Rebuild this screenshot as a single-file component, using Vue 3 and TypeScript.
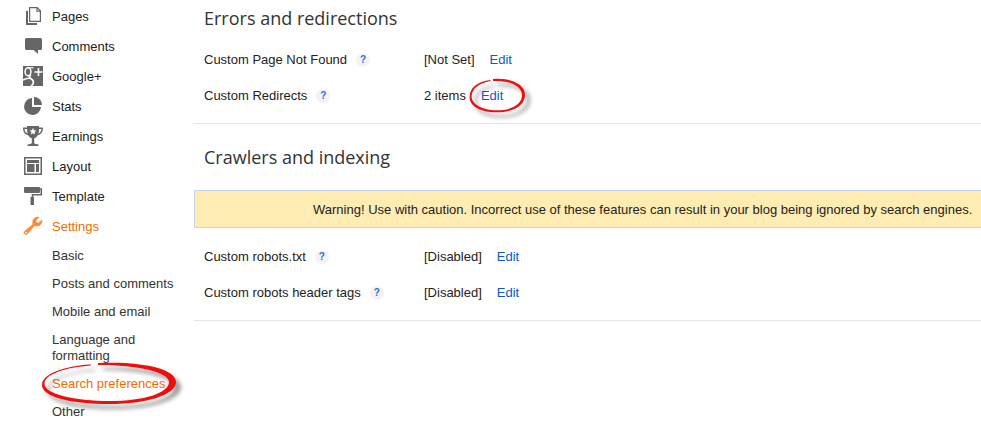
<script setup lang="ts">
interface NavItem {
  label: string
  icon: string
  active?: boolean
}

interface SubItem {
  label: string
  active?: boolean
}

interface Setting {
  label: string
  value: string
  marked?: boolean
}

const navItems: NavItem[] = [
  { label: 'Pages', icon: 'pages' },
  { label: 'Comments', icon: 'comments' },
  { label: 'Google+', icon: 'gplus' },
  { label: 'Stats', icon: 'stats' },
  { label: 'Earnings', icon: 'earnings' },
  { label: 'Layout', icon: 'layout' },
  { label: 'Template', icon: 'template' },
  { label: 'Settings', icon: 'settings', active: true },
]

const subItems: SubItem[] = [
  { label: 'Basic' },
  { label: 'Posts and comments' },
  { label: 'Mobile and email' },
  { label: 'Language and formatting' },
  { label: 'Search preferences', active: true },
  { label: 'Other' },
]

const errorSettings: Setting[] = [
  { label: 'Custom Page Not Found', value: '[Not Set]' },
  { label: 'Custom Redirects', value: '2 items', marked: true },
]

const crawlerSettings: Setting[] = [
  { label: 'Custom robots.txt', value: '[Disabled]' },
  { label: 'Custom robots header tags', value: '[Disabled]' },
]

const sections = [
  { title: 'Errors and redirections', warning: '', settings: errorSettings },
  {
    title: 'Crawlers and indexing',
    warning:
      'Warning! Use with caution. Incorrect use of these features can result in your blog being ignored by search engines.',
    settings: crawlerSettings,
  },
]
</script>

<template>
  <div class="page">
    <nav class="sidebar" aria-label="Blog">
      <ul class="nav">
        <li v-for="item in navItems" :key="item.label">
          <a href="#" class="nav-link" :class="{ active: item.active }">
            <svg class="icon" viewBox="0 0 20 20" width="20" height="20" aria-hidden="true">
              <g v-if="item.icon === 'pages'">
                <path d="M3 5h2v12h9v2H3z" fill="currentColor" />
                <path d="M6.6 1.6h7.6l3.2 3.2v10.6H6.6z" fill="#fff" stroke="currentColor" stroke-width="1.2" />
                <path d="M14 1.5v3.6h3.6" fill="none" stroke="currentColor" stroke-width="1.2" />
              </g>
              <path
                v-else-if="item.icon === 'comments'"
                d="M3.500 2h14A1.500 1.500 0 0 1 19 3.500v9a1.500 1.500 0 0 1-1.500 1.500H15v4l-4.500-4h-7A1.500 1.500 0 0 1 2 12.500v-9A1.500 1.500 0 0 1 3.500 2z"
                fill="currentColor"
              />
              <g v-else-if="item.icon === 'gplus'">
                <rect width="20" height="20" fill="currentColor" />
                <g fill="none" stroke="#fff">
                  <ellipse cx="5" cy="5.700" rx="2.900" ry="4" stroke-width="1.500" />
                  <path d="M4.500 1.800h6" stroke-width="1.200" />
                  <path d="M8 9q-2.600 1.600-.6 3.200 3.400 2 2.900 4.600-.4 2-2.300 3.200" stroke-width="1.700" />
                  <path d="M0 14.200q3-2.200 7-1.800" stroke-width="1.500" />
                  <path d="M11.500 6h8M15.500 2v8" stroke-width="1.600" />
                </g>
              </g>
              <g v-else-if="item.icon === 'stats'" fill="currentColor">
                <path d="M9 2a8.500 8.500 0 1 0 9 9H9z" />
                <path d="M11 1a8 8 0 0 1 8 8h-8z" />
              </g>
              <g v-else-if="item.icon === 'earnings'">
                <path
                  d="M4 0h12v1.500h4c0 4-1.500 6.800-5.200 7.800-1 1.700-2.100 2.500-3.600 3V17c0 1 2.300 1 4.300 1.500V20h-11v-1.500C6.500 18 8.800 18 8.800 17v-4.700c-1.500-.5-2.600-1.300-3.600-3C1.500 8.300 0 5.500 0 1.500h4z"
                  fill="currentColor"
                />
                <path d="M1.500 3H4c0 1.800.2 3.300.7 4.600C2.600 6.700 1.700 5.200 1.500 3zM18.500 3H16c0 1.800-.2 3.300-.7 4.600 2.100-.9 3-2.400 3.200-4.600z" fill="#fff" />
                <path d="M10 1.800l1 2.400 2.600.2-2 1.700.6 2.500L10 7.300 7.800 8.600l.6-2.500-2-1.700 2.600-.2z" fill="#fff" />
              </g>
              <g v-else-if="item.icon === 'layout'">
                <rect x="1.750" y="1.750" width="16.500" height="16.500" fill="#fff" stroke="currentColor" stroke-width="1.500" />
                <path d="M4 4h12v3H4zM4 8h7.500v8H4zM13 8h3v8h-3z" fill="currentColor" />
              </g>
              <g v-else-if="item.icon === 'template'">
                <path d="M2 1h14q1 0 1 1v4q0 1-1 1H2q-1 0-1-1V2q0-1 1-1z" fill="currentColor" />
                <path d="M16.500 3H18.300v5.700H9.500V12" fill="none" stroke="currentColor" stroke-width="1.600" />
                <path d="M7.500 11h3.500v8H7.500z" fill="currentColor" />
              </g>
              <g v-else>
                <path
                  d="M16 1.200l-3 3.300.3 2.200 2.200.3L18.900 4c.5 3-1.500 6-5.100 6-.9 0-1.600-.2-2.200-.5L4.300 17.900c-1.700 1.800-4.500-.6-2.900-2.500L10 8.200C8.700 4 11.700.5 16 1.200z"
                  fill="currentColor"
                  stroke="currentColor"
                  stroke-width="0.600"
                />
                <circle cx="3.100" cy="16.600" r="0.900" fill="#fff" />
              </g>
            </svg>
            <span class="nav-text">{{ item.label }}</span>
          </a>
        </li>
      </ul>
      <ul class="subnav">
        <li v-for="item in subItems" :key="item.label">
          <a href="#" class="sub-link" :class="{ active: item.active }">
            {{ item.label }}
            <svg v-if="item.active" class="ring ring-wide" viewBox="0 0 148 54" width="148" height="54" aria-hidden="true">
              <path
                d="M58 3C103 1 136 9 136 22C136 35 106 44 70 44C31 44 2 37 2 25C2 14 24 6 51 4.500V5.600C26 7.500 4.500 14 4.500 24C4.500 34 34 41 70 41C104 41 129 33 129 22C129 12 98 5 58 5z"
                fill="#f20d0d"
              />
            </svg>
          </a>
        </li>
      </ul>
    </nav>

    <main class="content">
      <section v-for="section in sections" :key="section.title" class="section">
        <h2>{{ section.title }}</h2>
        <p v-if="section.warning" class="warning">{{ section.warning }}</p>
        <dl class="settings">
          <div v-for="setting in section.settings" :key="setting.label" class="setting">
            <dt>
              {{ setting.label }}
              <button type="button" class="help" :aria-label="'Help: ' + setting.label">?</button>
            </dt>
            <dd>
              <span>{{ setting.value }}</span>
              <a href="#" class="edit">
                Edit
                <svg v-if="setting.marked" class="ring ring-small" viewBox="0 0 66 46" width="66" height="46" aria-hidden="true">
                  <path
                    d="M25 2C44 .5 57 8 57 18C57 28 46 35.300 29 35.300C12 35.300 1.600 29 1.600 20C1.600 11 9 4.500 22.500 3V4C11 6 3.600 12 3.600 19.500C3.600 27 14 33.300 29 33.300C44 33.300 54 27 54 18C54 9 42 3 25 4z"
                    fill="#f20d0d"
                  />
                </svg>
              </a>
            </dd>
          </div>
        </dl>
      </section>
    </main>
  </div>
</template>

<style>
body {
  margin: 0;
  background: #fff;
}
</style>

<style scoped>
.page {
  display: grid;
  grid-template-columns: 194px minmax(0, 1fr);
  font-family: 'Liberation Sans', Arial, sans-serif;
  font-size: 13px;
  line-height: 16px;
  color: #222;
}

ul,
dl,
dd {
  margin: 0;
  padding: 0;
  list-style: none;
}

a {
  text-decoration: none;
}

.sidebar {
  padding-top: 1px;
}

.nav-link {
  display: flex;
  align-items: center;
  gap: 9px;
  height: 30px;
  padding-left: 23px;
  color: #222;
}

.nav-text {
  padding-top: 2px;
}

.icon {
  flex: none;
  color: #666;
}

.nav-link.active {
  color: #f56a00;
}

.nav-link.active .icon {
  color: #ff8833;
}

.subnav {
  padding: 1px 16px 0 52px;
}

.subnav li {
  padding: 6px 0;
}

.sub-link {
  position: relative;
  display: block;
  max-width: 126px;
  color: #333;
}

.sub-link.active {
  color: #f56a00;
}

.ring {
  position: absolute;
  overflow: visible;
  pointer-events: none;
  filter: drop-shadow(5px 5px 2px rgba(0, 0, 0, 0.4));
}

.ring-wide {
  left: -12px;
  top: -16px;
}

.ring-small {
  left: -13px;
  top: -11px;
}

.content {
  padding-top: 6px;
}

.section {
  padding-bottom: 10px;
  margin-bottom: 21px;
  border-bottom: 1px solid #e5e5e5;
}

h2 {
  margin: 0 0 11px;
  padding-left: 10px;
  font-family: 'Open Sans', sans-serif;
  font-size: 18px;
  font-weight: 400;
  line-height: 24px;
  color: #333;
}

.warning {
  margin: 21px 0 10px;
  padding: 11px 0 9px 118px;
  border: 1px solid #c8d2f0;
  border-right: 0;
  background: #ffecb3;
  white-space: nowrap;
}

.setting {
  box-sizing: border-box;
  display: grid;
  grid-template-columns: 220px 1fr;
  align-items: center;
  height: 36px;
  padding: 2px 0 0 10px;
}

dt {
  display: flex;
  align-items: center;
  gap: 9px;
}

dd {
  display: flex;
  gap: 15px;
}

.help {
  width: 14px;
  height: 14px;
  padding: 0;
  border: 0;
  border-radius: 50%;
  background: #f3f3f3;
  color: #2f6fdc;
  font-family: inherit;
  font-size: 10px;
  font-weight: 700;
  line-height: 14px;
  text-align: center;
}

.edit {
  position: relative;
  color: #15c;
}
</style>
